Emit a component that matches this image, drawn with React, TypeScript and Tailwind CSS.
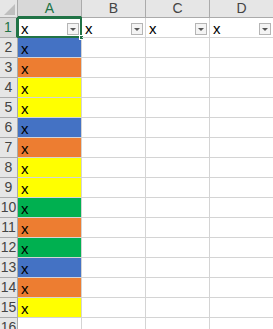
const rowColors = [
  "bg-[#4472c4]",
  "bg-[#ed7d31]",
  "bg-[#ffff00]",
  "bg-[#ffff00]",
  "bg-[#4472c4]",
  "bg-[#ed7d31]",
  "bg-[#ffff00]",
  "bg-[#ffff00]",
  "bg-[#00b050]",
  "bg-[#ed7d31]",
  "bg-[#00b050]",
  "bg-[#4472c4]",
  "bg-[#ed7d31]",
  "bg-[#ffff00]",
];

function FilterButton() {
  return (
    <div className="absolute right-[2px] bottom-[2px] w-[12px] h-[12px] border border-[#b5b5b5] bg-[#f4f4f4] flex items-center justify-center">
      <div className="w-0 h-0 border-l-[3px] border-r-[3px] border-t-[3px] border-l-transparent border-r-transparent border-t-[#555]" />
    </div>
  );
}

export default function App() {
  const cols = ["A", "B", "C", "D"];
  return (
    <main
      className="w-[273px] h-[329px] overflow-hidden bg-white"
      style={{ fontFamily: '"Liberation Sans", Arial, sans-serif' }}
    >
      <div className="grid grid-cols-[18px_64px_64px_64px_64px] grid-rows-[18px] auto-rows-[20px]">
        {/* Corner */}
        <div className="relative bg-[#e6e6e6] border-r border-b border-[#ababab]">
          <svg className="absolute right-[2px] bottom-[2px]" width="11" height="11">
            <polygon points="11,0 11,11 0,11" fill="#bfbfbf" />
          </svg>
        </div>

        {/* Column headers */}
        {cols.map((c, i) => (
          <div
            key={c}
            className={
              i === 0
                ? "flex items-center justify-center bg-[#d8d8d8] text-[#217346] text-[14px] border-r border-[#ababab] border-b-2 border-b-[#217346]"
                : "flex items-center justify-center bg-[#e6e6e6] text-[#444] text-[14px] border-r border-b border-[#ababab]"
            }
          >
            {c}
          </div>
        ))}

        {/* Row 1 */}
        <div className="flex items-center justify-center bg-[#d8d8d8] text-[#217346] text-[14px] border-b border-[#ababab] border-r-2 border-r-[#217346]">
          1
        </div>
        {cols.map((c, i) => (
          <div
            key={c}
            className="relative flex items-center border-r border-b border-[#d4d4d4] text-[15px] leading-none pl-[3px] pt-[2px] text-black"
          >
            x
            <FilterButton />
            {i === 0 && (
              <>
                <div className="absolute -left-[1px] -top-[1px] -right-[1px] -bottom-[1px] border-2 border-[#217346]" />
                <div className="absolute -right-[3px] -bottom-[3px] w-[5px] h-[5px] bg-[#217346] border border-white" />
              </>
            )}
          </div>
        ))}

        {/* Rows 2-16 */}
        {Array.from({ length: 15 }).map((_, r) => {
          const n = r + 2;
          const color = rowColors[r];
          return (
            <div key={n} className="contents">
              <div className="flex items-center justify-center bg-[#e6e6e6] text-[#444] text-[14px] border-r border-b border-[#ababab]">
                {n}
              </div>
              <div
                className={`flex items-center border-r border-b border-[#d4d4d4] text-[15px] leading-none pl-[3px] pt-[2px] text-black ${
                  color ?? ""
                }`}
              >
                {color ? "x" : ""}
              </div>
              <div className="border-r border-b border-[#d4d4d4]" />
              <div className="border-r border-b border-[#d4d4d4]" />
              <div className="border-r border-b border-[#d4d4d4]" />
            </div>
          );
        })}
      </div>
    </main>
  );
}
